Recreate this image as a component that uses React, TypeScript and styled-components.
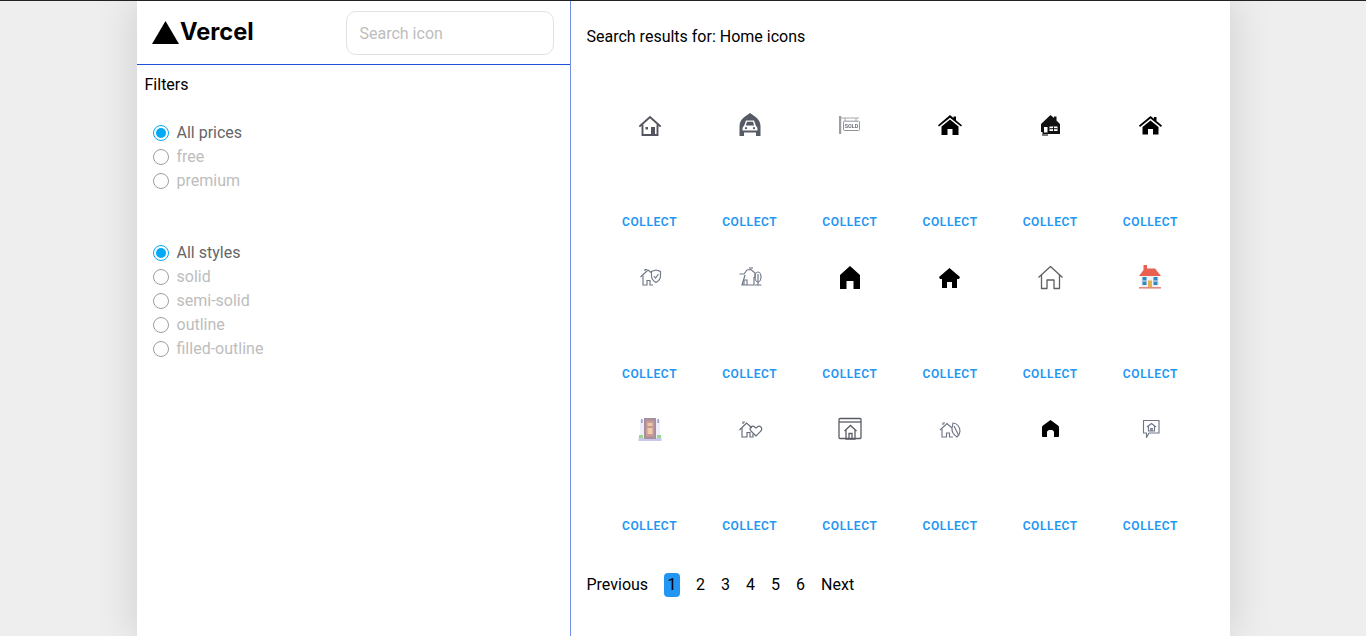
import React from "react";
import styled, { createGlobalStyle } from "styled-components";

const Global = createGlobalStyle`
  html, body { margin: 0; padding: 0; height: 100%; overflow: hidden; background: #eeeeee; }
  body { font-family: Roboto, "Liberation Sans", sans-serif; font-size: 16px; color: #000; }
  #root { height: 100%; }
`;

const Page = styled.div`
  height: 636px;
  box-sizing: border-box;
  display: flex;
  justify-content: center;
  border-top: 1px solid #222;
  background: #eeeeee;
  overflow: hidden;
`;

const Sheet = styled.main`
  width: 1093px;
  background: #fff;
  box-shadow: 0 0 40px rgba(0, 0, 0, 0.14);
  display: flex;
`;

const Sidebar = styled.aside`
  width: 434px;
  flex: none;
  box-sizing: border-box;
  border-right: 1px solid #6f8fe8;
  display: flex;
  flex-direction: column;
`;

const Header = styled.header`
  height: 64px;
  flex: none;
  box-sizing: border-box;
  border-bottom: 1px solid #1f4fd8;
  display: flex;
  align-items: center;
  justify-content: space-between;
  padding: 0 16px 0 15.5px;
`;

const Logo = styled.div`
  display: flex;
  align-items: center;
  gap: 1px;
  height: 24px;
  margin-bottom: 2px;
`;

const LogoWord = styled.span`
  font-family: "Inter", "Liberation Sans", sans-serif;
  font-weight: 700;
  font-size: 23.6px;
  letter-spacing: 0;
  line-height: 24px;
`;

const Search = styled.input`
  width: 208px;
  height: 44px;
  box-sizing: border-box;
  border: 1px solid #e2e2e2;
  border-radius: 10px;
  padding: 0 13px;
  font: 16px Roboto, sans-serif;
  margin-top: 1px;
  outline: none;
  &::placeholder { color: #bdbdbd; opacity: 1; }
`;

const FiltersBody = styled.div`
  padding: 8px;
  display: flex;
  flex-direction: column;
  gap: 48px;
`;

const FiltersTitle = styled.div`
  line-height: 24px;
  margin-bottom: -25px;
`;

const RadioGroup = styled.div`
  display: flex;
  flex-direction: column;
`;

const RadioRow = styled.label<{ $active?: boolean }>`
  height: 24px;
  display: flex;
  align-items: center;
  gap: 8px;
  padding-left: 8px;
  color: ${(p) => (p.$active ? "#666666" : "#bdbdbd")};
`;

const RadioMark = styled.span<{ $active?: boolean }>`
  width: 16px;
  height: 16px;
  margin-top: 2px;
  box-sizing: border-box;
  border-radius: 50%;
  border: ${(p) => (p.$active ? "1.5px solid #03a9f4" : "1px solid #9e9e9e")};
  display: flex;
  align-items: center;
  justify-content: center;
  &::after {
    content: "";
    display: ${(p) => (p.$active ? "block" : "none")};
    width: 10px;
    height: 10px;
    border-radius: 50%;
    background: #03a9f4;
  }
`;

const Results = styled.section`
  flex: 1;
  min-width: 0;
  padding: 24px 16px 0;
  display: flex;
  flex-direction: column;
`;

const ResultsTitle = styled.h1`
  margin: 0;
  font-size: 16px;
  font-weight: 400;
  line-height: 24px;
`;

const IconGrid = styled.div`
  margin: 40px 0 0 13px;
  width: 601px;
  display: grid;
  grid-template-columns: repeat(6, 1fr);
  grid-auto-rows: 152px;
`;

const Cell = styled.article`
  display: flex;
  flex-direction: column;
  align-items: center;
`;

const IconBox = styled.div`
  margin-top: 24px;
  height: 24px;
  width: 24px;
  flex: none;
  svg { display: block; overflow: visible; filter: blur(0.35px); }
`;

const Collect = styled.button`
  margin-top: 77px;
  padding: 0;
  border: 0;
  background: none;
  color: #2196f3;
  font: 600 12px/16px Roboto, sans-serif;
  letter-spacing: 0.6px;
  text-transform: uppercase;
`;

const Pager = styled.nav`
  margin-top: 28px;
  display: flex;
  align-items: center;
  gap: 16px;
  height: 24px;
  line-height: 24px;
`;

const PageNum = styled.span<{ $current?: boolean }>`
  height: 24px;
  border-radius: 4px;
  padding: ${(p) => (p.$current ? "0 3.5px" : "0")};
  background: ${(p) => (p.$current ? "#2196f3" : "transparent")};
`;

const S: React.FC<{ children: React.ReactNode }> = ({ children }) => (
  <svg width="24" height="24" viewBox="0 0 24 24">{children}</svg>
);

const HOUSE_BLACK = "M12 2 L15.5 5 V3.5 H18 V7.2 L24 12.3 L23 13.5 L12 4.7 L1 13.5 L0 12.3 Z M3.5 13.5 L12 6.6 L20.5 13.5 V22 H14.5 V16 H9.5 V22 H3.5 Z";

const icons: React.ReactNode[] = [
  <S key="0">
    <g fill="none" stroke="#555560" strokeWidth="1.9">
      <path d="M2 13 L12 4 L22 13" strokeLinecap="round" />
      <path d="M4.5 11.5 V22 H19.5 V11.5" />
    </g>
    <rect x="13" y="14" width="4" height="8" fill="#555560" />
    <rect x="7.5" y="14" width="2.5" height="2.5" fill="#555560" />
  </S>,
  <S key="1">
    <path fillRule="evenodd" fill="#555a64" d="M12 0 L17 3.5 C20.5 6 22.5 9 22.5 13 V23 H18 V19.5 H6 V23 H1.5 V13 C1.5 9 3.5 6 7 3.5 Z M8 7.5 L6 13 C4.5 14 4.5 15 4.5 17.5 H19.5 C19.5 15 19.5 14 18 13 L16 7.5 Z" />
    <path fill="#555a64" d="M9 8.8 H15 L16.2 12.5 H7.8 Z" />
    <circle cx="8" cy="15.2" r="1.1" fill="#555a64" />
    <circle cx="16" cy="15.2" r="1.1" fill="#555a64" />
  </S>,
  <S key="2">
    <rect x="1" y="3" width="2.2" height="18" fill="#9a9da3" />
    <path d="M3 5 H21 M7 5 V8 M18 5 V8" stroke="#a5a8ad" fill="none" />
    <rect x="5.5" y="8.2" width="16" height="9.3" rx="1" fill="#fff" stroke="#8f9298" strokeWidth="1" />
    <text x="13.5" y="15" textAnchor="middle" fontFamily="Roboto, sans-serif" fontWeight="700" fontSize="5.4" fill="#6e7178">SOLD</text>
  </S>,
  <S key="3">
    <path fill="#000" fillRule="evenodd" d={HOUSE_BLACK} />
  </S>,
  <S key="4">
    <path fill="#111" fillRule="evenodd" d="M12.5 2 L16 5 V3.5 H18.5 V7.5 L22 11 V21 H4.5 V19 H3 V11 Z M6 14 V19.5 H9.5 V14 Z M11.5 13.5 V18 H19.5 V13.5 Z" />
    <path d="M4 22 H10" stroke="#222" strokeWidth="1.2" />
    <path d="M15.5 13.5 V18 M11.5 15.7 H19.5" stroke="#111" strokeWidth="1" />
  </S>,
  <S key="5">
    <path fill="#000" fillRule="evenodd" d="M12.5 3 L16 5.8 V4 H18.5 V8 L24 12.6 L23 14 L12.5 5.6 L2 14 L1 12.6 Z M4.5 14 L12.5 7.5 L20.5 14 V21.5 H15 V16 H10 V21.5 H4.5 Z" />
  </S>,
  <S key="6">
    <g fill="none" stroke="#6f7686" strokeWidth="1.15">
      <path d="M2.5 12 L10 5 L13 7.5" />
      <path d="M5 10.5 V20 H9 V15.5 H12 V20 H15" />
      <path d="M7 6 V4.5 H9" />
      <path d="M18 5 L22.5 6.5 V11 C22.5 14 20.5 16 18 17.5 C15.5 16 13.5 14 13.5 11 V6.5 Z" />
      <path d="M15.8 11 L17.5 13 L20.5 9" />
    </g>
  </S>,
  <S key="7">
    <g fill="none" stroke="#6f7686" strokeWidth="1.15">
      <path d="M1.5 9 H6 L9 5 L13 4.5 L17 8 V13" />
      <path d="M7 10 L4 20 H16 V12" />
      <path d="M6 20 V15 H9 V20" />
      <path d="M11 3 H15" />
      <ellipse cx="20" cy="12" rx="3" ry="5" />
      <path d="M20 9 V20 M17 20 H23.5" />
    </g>
  </S>,
  <S key="8">
    <path fill="#000" fillRule="evenodd" d="M12 1 L22 10 V24 H15.5 V16 H8.5 V24 H2 V10 Z" />
  </S>,
  <S key="9">
    <path fill="#000" fillRule="evenodd" d="M11.5 3 L22 12 L21 14 H19 V23 H14 V17 H9 V23 H4 V14 H2 L1 12 Z" />
  </S>,
  <S key="10">
    <g fill="none" stroke="#5f5f5f" strokeWidth="1.3" strokeLinejoin="round">
      <path d="M.5 12.5 L12.5 1.5 L24.5 12.5" />
      <path d="M3.5 10 V23.5 H9 V15 H16 V23.5 H21.5 V10" />
    </g>
  </S>,
  <S key="11">
    <path fill="#e95f50" d="M5.5 0 H9 V3.5 H17 L23 11 H1 L5.5 5 Z" />
    <rect x="3" y="11" width="18" height="11" fill="#eef1f4" />
    <rect x="4.5" y="12" width="4" height="8" fill="#2f86c1" />
    <rect x="15.5" y="12" width="4" height="8" fill="#2f86c1" />
    <path d="M4.5 16 H8.5 M15.5 16 H19.5" stroke="#eef1f4" />
    <rect x="10" y="15.5" width="4" height="6.5" fill="#e3b24f" />
    <rect x="1" y="22" width="22" height="1.6" fill="#e8897d" />
  </S>,
  <S key="12">
    <rect x="0.5" y="21" width="23" height="3" fill="#c8c8ec" />
    <rect x="2" y="3" width="20" height="18" fill="#eeeefa" />
    <rect x="6" y="1" width="12" height="21" fill="#a98f9d" />
    <rect x="8" y="3.5" width="8" height="16" fill="#c69d96" />
    <rect x="9.5" y="6" width="5" height="3" fill="#edc7a2" />
    <rect x="9.5" y="11" width="5" height="6" fill="#f1c9a5" />
    <rect x="1" y="18" width="4" height="3" fill="#98d68b" />
    <rect x="19" y="18" width="4" height="3" fill="#98d68b" />
    <rect x="3" y="2" width="1.6" height="4" fill="#9aa0c8" />
    <rect x="19.4" y="2" width="1.6" height="4" fill="#9aa0c8" />
  </S>,
  <S key="13">
    <g fill="none" stroke="#666b78" strokeWidth="1.15">
      <path d="M1.5 13 L8.5 6 L14 11" />
      <path d="M4 11 V20 H9 V15.5 H12 V20 H15 V17" />
      <path d="M5 7 V5 H7" />
      <path d="M18 19 L13 14 C10.5 11 14 7.5 17 10.2 L18 11 L19 10.2 C22 7.5 25 11 23 14 Z" />
    </g>
  </S>,
  <S key="14">
    <g fill="none" stroke="#5a5d66" strokeWidth="1.3">
      <rect x="1" y="1.5" width="22" height="20" rx="1" />
      <path d="M1 5 H23" />
      <path d="M6.5 14 L12.5 8.5 L18.5 14" />
      <path d="M8 13 V22 H17 V13" />
      <path d="M11 22 V16.5 H14 V22" />
    </g>
  </S>,
  <S key="15">
    <g fill="none" stroke="#6f7686" strokeWidth="1.15">
      <path d="M2 13 L9 6.5 L14 11" />
      <path d="M4 12 V20 H8.5 V16 H11.5 V20 H15" />
      <path d="M5 8 V6 H7" />
      <path d="M15 6 C19 6 22 10 22 14 C22 17 20 19 19 20 C16 18 13.5 15 14 11 Z" />
      <path d="M16 9 L21 19" />
    </g>
  </S>,
  <S key="16">
    <path fill="#000" fillRule="evenodd" d="M12.5 3 L20 8.5 C20.8 9 21 9.6 21 10.5 V19 C21 19.6 20.6 20 20 20 H16 V15.5 C16 13.5 14.5 13 12.5 13 C10.5 13 9 13.5 9 15.5 V20 H5 C4.4 20 4 19.6 4 19 V10.5 C4 9.6 4.2 9 5 8.5 Z" />
  </S>,
  <S key="17">
    <g fill="none" stroke="#6f7686" strokeWidth="1.15">
      <path d="M6.5 3.5 H21 V16 H11 L8.5 20.5 V16 H5.5 V3.5 Z" strokeLinejoin="round" />
      <path d="M9 10 L13.5 6.5 L18 10" />
      <path d="M10.5 9 V14 H16.5 V9" />
      <path d="M12.8 14 V11.5 H14.2 V14" />
    </g>
  </S>,
];

const prices = ["All prices", "free", "premium"];
const styles = ["All styles", "solid", "semi-solid", "outline", "filled-outline"];

export default function App() {
  return (
    <>
      <Global />
      <Page>
        <Sheet>
          <Sidebar>
            <Header>
              <Logo>
                <svg width="27" height="24" viewBox="0 0 27 24" style={{ display: "block" }}>
                  <path d="M13.5 1 L27 24 H0 Z" fill="#000" />
                </svg>
                <LogoWord>Vercel</LogoWord>
              </Logo>
              <Search placeholder="Search icon" />
            </Header>
            <FiltersBody>
              <FiltersTitle>Filters</FiltersTitle>
              <RadioGroup>
                {prices.map((t, i) => (
                  <RadioRow key={t} $active={i === 0}>
                    <RadioMark $active={i === 0} />
                    {t}
                  </RadioRow>
                ))}
              </RadioGroup>
              <RadioGroup>
                {styles.map((t, i) => (
                  <RadioRow key={t} $active={i === 0}>
                    <RadioMark $active={i === 0} />
                    {t}
                  </RadioRow>
                ))}
              </RadioGroup>
            </FiltersBody>
          </Sidebar>
          <Results>
            <ResultsTitle>Search results for: Home icons</ResultsTitle>
            <IconGrid>
              {icons.map((ic, i) => (
                <Cell key={i}>
                  <IconBox>{ic}</IconBox>
                  <Collect>Collect</Collect>
                </Cell>
              ))}
            </IconGrid>
            <Pager>
              <PageNum>Previous</PageNum>
              {[1, 2, 3, 4, 5, 6].map((n) => (
                <PageNum key={n} $current={n === 1}>{n}</PageNum>
              ))}
              <PageNum>Next</PageNum>
            </Pager>
          </Results>
        </Sheet>
      </Page>
    </>
  );
}
